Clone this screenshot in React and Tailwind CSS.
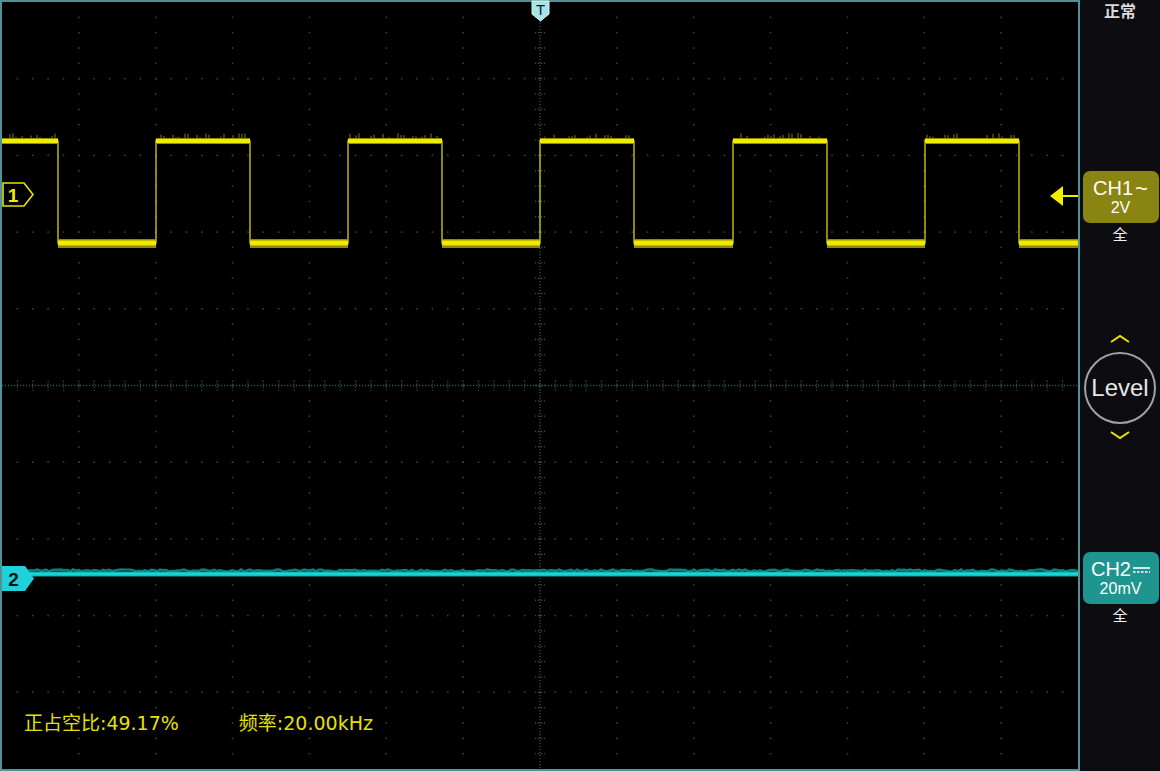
import React from "react";

const X0 = 2;
const Y0 = 2;
const W = 1076;
const H = 767;
const majorX = (i) => X0 + (i * W) / 14;
const majorY = (j) => Y0 + (j * H) / 10;

const HIGH_Y = 141;
const LOW_Y = 243;
const highs = [[2, 58], [156, 250], [348, 442], [540, 634], [733, 827], [925, 1019]];
const lows = [[58, 156], [250, 348], [442, 540], [634, 733], [827, 925], [1019, 1078]];

// deterministic jitter
const rnd = (n) => {
  const s = Math.sin(n * 12.9898) * 43758.5453;
  return s - Math.floor(s);
};

function Grid() {
  const dots = [];
  for (let i = 1; i < 14; i++) {
    if (i === 7) continue;
    const x = majorX(i);
    for (let k = 1; k < 50; k++) {
      dots.push(<rect key={`v${i}-${k}`} x={x - 0.8} y={Y0 + (k * H) / 50 - 0.8} width="1.6" height="1.6" />);
    }
  }
  for (let j = 1; j < 10; j++) {
    if (j === 5) continue;
    const y = majorY(j);
    for (let k = 1; k < 70; k++) {
      dots.push(<rect key={`h${j}-${k}`} x={X0 + (k * W) / 70 - 0.8} y={y - 0.8} width="1.6" height="1.6" />);
    }
  }
  const cx = majorX(7);
  const cy = majorY(5);
  const ticks = [];
  for (let k = 1; k < 70; k++) {
    const x = X0 + (k * W) / 70;
    ticks.push(<line key={`tx${k}`} x1={x} x2={x} y1={cy - 5} y2={cy + 5} />);
  }
  for (let k = 1; k < 50; k++) {
    const y = Y0 + (k * H) / 50;
    ticks.push(<line key={`ty${k}`} x1={cx - 5} x2={cx + 5} y1={y} y2={y} />);
  }
  return (
    <g>
      <g fill="#30423f">{dots}</g>
      <g stroke="#33524f" strokeWidth="1.3" strokeDasharray="1.3 1.7">
        <line x1={X0} x2={X0 + W} y1={cy} y2={cy} />
        <line x1={cx} x2={cx} y1={Y0} y2={Y0 + H} />
        {ticks}
      </g>
    </g>
  );
}

function Ch1Trace() {
  let d = `M${X0} ${HIGH_Y}`;
  highs.forEach(([a, b], i) => {
    d += ` H${b} V${LOW_Y}`;
    if (lows[i] && lows[i][1] < 1078) d += ` H${lows[i][1]} V${HIGH_Y}`;
    else d += ` H1078`;
  });
  const noise = [];
  highs.forEach(([a, b], s) => {
    for (let x = a + 2; x < b - 2; x += 3) {
      const r = rnd(x + s * 7);
      if (r < 0.5) continue;
      const h = 2 + rnd(x * 3.1) * 4;
      noise.push(<line key={`n${x}`} x1={x} x2={x} y1={HIGH_Y - 2 - h} y2={HIGH_Y - 1} />);
    }
  });
  return (
    <g>
      <path d={d} stroke="#c9c600" strokeWidth="1.4" fill="none" />
      <g stroke="#7f7c00" strokeWidth="1">{noise}</g>
      {highs.map(([a, b]) => (
        <g key={`hi${a}`}>
          <rect x={a} y={HIGH_Y - 3} width={b - a} height="6" fill="#8f8c00" />
          <rect x={a} y={HIGH_Y - 2} width={b - a} height="4" fill="#f0ec00" />
        </g>
      ))}
      {lows.map(([a, b]) => (
        <g key={`lo${a}`}>
          <rect x={a} y={LOW_Y - 4} width={b - a} height="9" fill="#8f8c00" />
          <rect x={a} y={LOW_Y - 2.5} width={b - a} height="5" fill="#eeea00" />
        </g>
      ))}
    </g>
  );
}

function Ch2Trace() {
  const pts = [];
  for (let x = 28; x <= 1078; x += 3) {
    const wob = (rnd(x * 0.37) - 0.5) * 2.2;
    pts.push(`${x},${570.5 + wob}`);
  }
  return (
    <g>
      <polyline points={pts.join(" ")} stroke="#0d7f80" strokeWidth="2.4" fill="none" />
      <rect x="28" y="571.5" width="1050" height="5" fill="#10a8aa" />
      <rect x="28" y="572.5" width="1050" height="3" fill="#18d4d4" />
    </g>
  );
}

function Markers() {
  return (
    <g>
      {/* trigger position */}
      <polygon points="532,1 549,1 549,14 540.5,21 532,14" fill="#a9e3e8" stroke="#d2f3f5" strokeWidth="1" />
      <text x="540.5" y="15" textAnchor="middle" fontSize="15" fontFamily="Liberation Sans, sans-serif" fill="#0a1a1c">
        T
      </text>
      {/* channel 1 */}
      <polygon points="3,183 24,183 33,194.5 24,206 3,206" fill="#000" stroke="#e6e300" strokeWidth="1.6" />
      <text x="13" y="201.5" textAnchor="middle" fontSize="19" fontWeight="bold" fontFamily="Liberation Sans, sans-serif" fill="#f0ec00">
        1
      </text>
      {/* channel 2 */}
      <polygon points="2,566 25,566 34,578.5 25,591 2,591" fill="#1fd2da" />
      <text x="13.5" y="585.5" textAnchor="middle" fontSize="19" fontWeight="bold" fontFamily="Liberation Sans, sans-serif" fill="#06141a">
        2
      </text>
      {/* trigger level arrow */}
      <polygon points="1050,196 1063,186 1063,206" fill="#f2ee00" />
      <line x1="1062" x2="1078" y1="196" y2="196" stroke="#f2ee00" strokeWidth="2" />
    </g>
  );
}

export default function App() {
  return (
    <div className="flex w-[1160px] h-[771px] bg-black font-['Liberation_Sans','Noto_Sans_CJK_SC',sans-serif] overflow-hidden">
      {/* Scope screen */}
      <div className="relative w-[1080px] h-[771px] shrink-0 border-2 border-[#4f9297] bg-black">
        <svg className="block overflow-visible" width="1076" height="767" viewBox="2 2 1076 767">
          <Grid />
          <Ch2Trace />
          <Ch1Trace />
          <Markers />
        </svg>
        <div className="absolute left-[22px] top-[709px] flex gap-[60px] text-[19px] leading-[24px] text-[#e4e000] font-['DejaVu_Sans','Noto_Sans_CJK_SC',sans-serif]">
          <span>正占空比:49.17%</span>
          <span>频率:20.00kHz</span>
        </div>
      </div>

      {/* Side panel */}
      <div className="flex flex-col items-center w-[80px] h-full bg-[#0d0c10] text-[#ececec]">
        <div className="mt-[2px] text-[16px] leading-[19px] font-bold text-[#dadada]">正常</div>

        <div className="mt-[150px] ml-[1px] w-[76px] h-[52px] rounded-[7px] bg-[#8a8513] flex flex-col items-center justify-center">
          <div className="flex items-center text-[20px] leading-[21px] text-white">
            <span>CH1</span>
            <span className="ml-[2px] text-[22px] leading-[18px]">~</span>
          </div>
          <div className="text-[16px] leading-[17px] text-white">2V</div>
        </div>
        <div className="mt-[2px] text-[15px] leading-[20px] text-[#f0f0f0]">全</div>

        <svg className="mt-[89px]" width="22" height="10" viewBox="0 0 22 10">
          <polyline points="2,8 11,2 20,8" fill="none" stroke="#e8e400" strokeWidth="2" />
        </svg>
        <div className="mt-[8px] w-[72px] h-[72px] rounded-full border-2 border-[#a2a2a2] flex items-center justify-center">
          <span className="text-[24px] leading-[26px] text-[#e6e6e6]">Level</span>
        </div>
        <svg className="mt-[6px]" width="22" height="10" viewBox="0 0 22 10">
          <polyline points="2,2 11,8 20,2" fill="none" stroke="#e8e400" strokeWidth="2" />
        </svg>

        <div className="mt-[112px] ml-[1px] w-[76px] h-[52px] rounded-[7px] bg-[#1f958f] flex flex-col items-center justify-center">
          <div className="flex items-center text-[20px] leading-[21px] text-white">
            <span>CH2</span>
            <svg className="ml-[2px]" width="17" height="8" viewBox="0 0 17 8">
              <line x1="0" x2="17" y1="2" y2="2" stroke="#fff" strokeWidth="1.6" />
              <line x1="0" x2="17" y1="6" y2="6" stroke="#fff" strokeWidth="1.4" strokeDasharray="2.5 1.5" />
            </svg>
          </div>
          <div className="text-[16px] leading-[17px] text-white">20mV</div>
        </div>
        <div className="mt-[2px] text-[15px] leading-[20px] text-[#f0f0f0]">全</div>
      </div>
    </div>
  );
}
